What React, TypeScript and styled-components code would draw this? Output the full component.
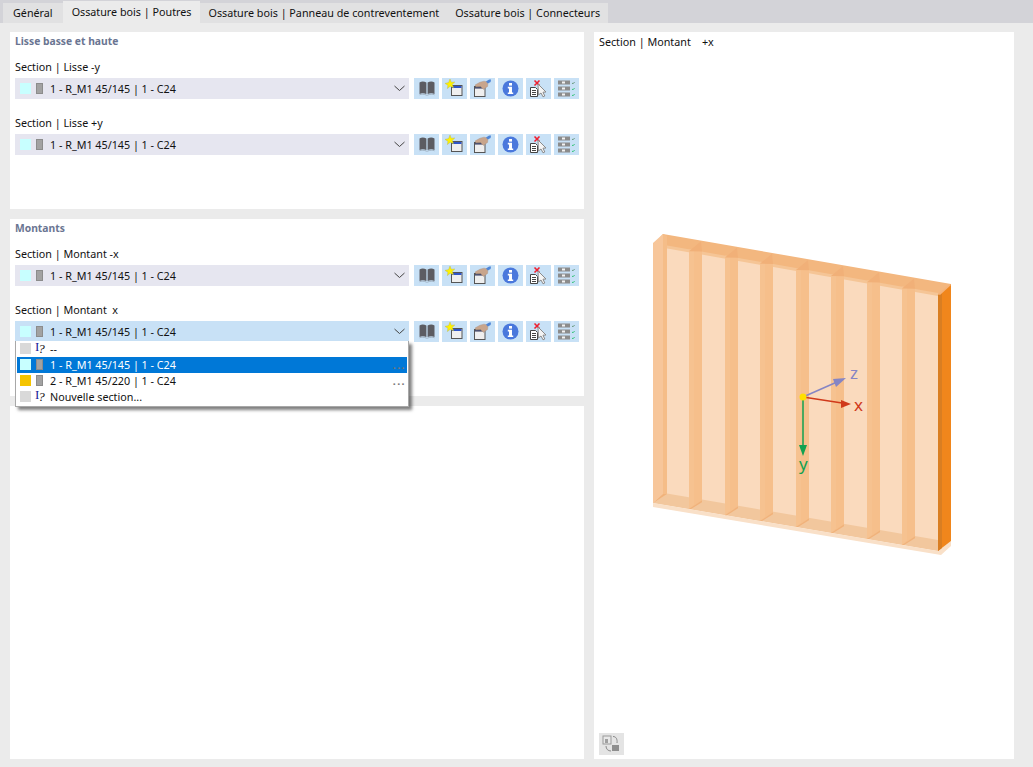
import React from "react";
import styled, { createGlobalStyle } from "styled-components";

const GlobalStyle = createGlobalStyle`
  html, body {
    margin: 0;
    padding: 0;
    background: #ebebeb;
  }
  * {
    box-sizing: border-box;
  }
`;

const tabs = [
  "Général",
  "Ossature bois | Poutres",
  "Ossature bois | Panneau de contreventement",
  "Ossature bois | Connecteurs"
];

const sectionOptions = [
  { label: "--", color: "#d9d9d9", unknown: true },
  { label: "1 - R_M1 45/145 | 1 - C24", color: "#c8ffff", selected: true, more: true },
  { label: "2 - R_M1 45/220 | 1 - C24", color: "#f5c400", more: true },
  { label: "Nouvelle section...", color: "#d9d9d9", unknown: true }
];

const BookIcon = () => (
  <svg width="16" height="15" viewBox="0 0 16 15">
    <path d="M0.5 1.5 C2.5 0.3 5 0.3 7.4 1.5 V13 C5 12 2.5 12 0.5 13 Z" fill="#5c5c62" />
    <path d="M15.5 1.5 C13.5 0.3 11 0.3 8.6 1.5 V13 C11 12 13.5 12 15.5 13 Z" fill="#5c5c62" />
    <path d="M0.5 13.8 C2.5 12.8 5 12.8 7.8 14.3 M15.5 13.8 C13.5 12.8 11 12.8 8.2 14.3" stroke="#9fb0c0" strokeWidth="1" fill="none" />
  </svg>
);

const NewIcon = () => (
  <svg width="21" height="19" viewBox="0 0 21 19">
    <rect x="7.5" y="6.5" width="10.5" height="10" fill="#efefef" stroke="#555" />
    <rect x="8" y="7" width="9.5" height="2" fill="#2f55c8" />
    <path d="M6 0 L7.2 3.2 L10.8 3 L8.2 5.4 L9.6 8.8 L6.2 7.2 L3.4 9.6 L3.9 6.2 L1 4.4 L4.6 3.6 Z" fill="#fff200" stroke="#b7b24a" strokeWidth="0.4" />
  </svg>
);

const EditIcon = () => (
  <svg width="21" height="19" viewBox="0 0 21 19">
    <rect x="2.5" y="7.5" width="10.5" height="10" fill="#efefef" stroke="#555" />
    <rect x="3" y="8" width="9.5" height="1.6" fill="#4a4f70" />
    <path d="M3 6 L8 3.2 L12 2.2 L16 3 L15.6 7.4 L11.4 10.4 L8.6 7.4 L4 7.8 Z" fill="#c8a58c" stroke="#a88f80" strokeWidth="0.4" />
    <path d="M14 2.6 C15.6 1 17.6 0.4 19 0.6 L18.6 3 L15.8 4.4 Z" fill="#4f86d8" />
  </svg>
);

const InfoIcon = () => (
  <svg width="17" height="17" viewBox="0 0 17 17">
    <circle cx="8.5" cy="8.5" r="8" fill="#4a78dc" />
    <rect x="7" y="3" width="3" height="2.6" fill="#fff" />
    <path d="M5.8 6.8 H10 V12.4 H11.2 V14 H5.8 V12.4 H7 V8.4 H5.8 Z" fill="#fff" />
  </svg>
);

const DeleteIcon = () => (
  <svg width="21" height="19" viewBox="0 0 21 19">
    <path d="M6.5 1.5 L11.5 6.5 M11.5 1.5 L6.5 6.5" stroke="#ee2030" strokeWidth="1.6" />
    <path d="M2.5 8.5 H7.5 L9.5 10.5 V17.5 H2.5 Z" fill="#fff" stroke="#444" />
    <path d="M4 11.5 H8 M4 13.5 H8 M4 15.5 H8" stroke="#444" />
    <path d="M10 5 L18 13 L15 13.2 L16.8 17 L15 17.8 L13 14 L10.4 16 Z" fill="#f4f4f4" stroke="#8a8a8a" />
  </svg>
);

const ListIcon = () => (
  <svg width="21" height="17" viewBox="0 0 21 17">
    {[0.5, 6.5, 12.5].map((y, i) => (
      <g key={y}>
        <rect x="2" y={y} width="12" height="4" fill="#8c8c8c" />
        <rect x="6" y={y + 1} width="3" height="2" fill="#f2f2f2" />
        <path d={`M16 ${y + 2.5} l1 0.8 l1.6 -1.8`} stroke={i === 0 ? "#6a9a80" : "#35c47a"} fill="none" />
      </g>
    ))}
  </svg>
);

const Chevron = () => (
  <svg width="11" height="7" viewBox="0 0 11 7">
    <path d="M0.5 1 L5.5 5.5 L10.5 1" stroke="#444" fill="none" />
  </svg>
);

const toolIcons = [BookIcon, NewIcon, EditIcon, InfoIcon, DeleteIcon, ListIcon];

const UnknownIcon = () => (
  <UnknownMark>
    <i>I</i>
    <b>?</b>
  </UnknownMark>
);

const SectionSelect = ({ open }: { open?: boolean }) => (
  <FieldRow>
    <SelectBox $open={open}>
      <Swatch $color="#c8ffff" />
      <SectionMark />
      <SelectText>1 - R_M1 45/145 | 1 - C24</SelectText>
      <Chevron />
      {open && (
        <Dropdown>
          {sectionOptions.map((option) => (
            <Option key={option.label} $selected={option.selected}>
              <Swatch $color={option.color} />
              {option.unknown ? <UnknownIcon /> : <SectionMark />}
              <SelectText>{option.label}</SelectText>
              {option.more && <MoreDots>...</MoreDots>}
            </Option>
          ))}
        </Dropdown>
      )}
    </SelectBox>
    <Tools>
      {toolIcons.map((Icon, i) => (
        <ToolButton key={i}>
          <Icon />
        </ToolButton>
      ))}
    </Tools>
  </FieldRow>
);

const Field = ({ label, open }: { label: string; open?: boolean }) => (
  <FieldBlock>
    <FieldLabel>{label}</FieldLabel>
    <SectionSelect open={open} />
  </FieldBlock>
);

const studs = [689, 725, 760, 796, 831, 867, 902];
const topY = (x: number) => 243 + (x - 653) * 0.1745;
const botY = (x: number) => 503 + (x - 653) * 0.1685;

const WallDrawing = () => (
  <Drawing viewBox="594 50 420 709">
    {/* front face */}
    <polygon points={`653,${topY(653)} 938,${topY(938)} 938,${botY(938)} 653,${botY(653)}`} fill="#fadabd" />
    {/* top plate */}
    <polygon points="663,234 951,284 938,295 653,245" fill="#f3b77f" />
    <polygon points="653,243 938,293 938,296 653,246" fill="#f5c596" />
    {/* bottom plate */}
    <polygon points={`664,${botY(653) - 10} 938,${botY(938) - 11} 938,${botY(938)} 653,${botY(653)}`} fill="#f2c79d" />
    <polygon points="653,503 938,551 951,541 951,546 941,555 653,507" fill="#f9e0c8" />
    {/* first stud */}
    <polygon points={`653,${topY(653)} 663,234 663,494 653,${botY(653)}`} fill="#f7c69a" />
    <polygon points={`663,234 667,236 667,494 663,494`} fill="#f5bd88" />
    <polygon points={`653,${botY(653)} 667,494 663,494`} fill="#f1b27a" />
    {/* studs */}
    {studs.map((x) => (
      <g key={x}>
        <polygon
          points={`${x},${topY(x)} ${x + 13},${topY(x + 13)} ${x + 13},${botY(x + 13) - 11} ${x},${botY(x)}`}
          fill="#f6bf8b"
        />
        <polygon
          points={`${x},${topY(x)} ${x + 5},${topY(x + 5)} ${x + 5},${botY(x + 5) - 5} ${x},${botY(x)}`}
          fill="#f6c290"
        />
        <polygon
          points={`${x},${topY(x) + 2} ${x + 12},${topY(x) - 8} ${x + 13},${topY(x + 13)}`}
          fill="#f1b078"
        />
        <polygon
          points={`${x},${botY(x)} ${x + 13},${botY(x + 13) - 11} ${x + 13},${botY(x + 13) - 9} ${x + 2},${botY(x)}`}
          fill="#f1b27a"
        />
      </g>
    ))}
    {/* right end stud */}
    <polygon points="938,295 951,284 951,541 938,551" fill="#f0861c" />
    <polygon points="938,295 942,292 942,548 938,551" fill="#d97e22" />
    <polygon points="938,294 949,285 951,285 940,295" fill="#f5b278" />
    {/* axes */}
    <path d="M803 397 L837 382" stroke="#8585c4" strokeWidth="1.5" />
    <polygon points="846,378 836,387 833,379" fill="#8585c4" />
    <path d="M803 397 L842 403" stroke="#d0391a" strokeWidth="1.5" />
    <polygon points="851,404 841,408 841,400" fill="#d0391a" />
    <path d="M803 397 L803 447" stroke="#12a150" strokeWidth="1.5" />
    <polygon points="803,456 799,445 807,445" fill="#12a150" />
    <circle cx="803" cy="397" r="3.5" fill="#ffe000" />
    <AxisLabel x="850" y="379" fill="#8585c4">z</AxisLabel>
    <AxisLabel x="854" y="411" fill="#d0391a">x</AxisLabel>
    <AxisLabel x="799" y="470" fill="#12a150">y</AxisLabel>
  </Drawing>
);

const RotateIcon = () => (
  <svg width="19" height="18" viewBox="0 0 19 18">
    <rect x="1" y="1" width="8" height="8" fill="#e8e8e8" stroke="#9a9a9a" />
    <rect x="3" y="4" width="3" height="4" fill="#a0a0a0" />
    <rect x="10" y="10" width="7" height="6" fill="#8e8e8e" />
    <path d="M11 1.5 C14 1.5 15.5 4 15 8 M4 11 C4 14 6 16 9 16" stroke="#8a8a8a" fill="none" />
  </svg>
);

export default function App() {
  return (
    <Page>
      <GlobalStyle />
      <TabBar>
        {tabs.map((tab, i) => (
          <Tab key={tab} $active={i === 1}>
            {tab}
          </Tab>
        ))}
      </TabBar>
      <Content>
        <LeftColumn>
          <Panel>
            <PanelTitle>Lisse basse et haute</PanelTitle>
            <Field label="Section | Lisse -y" />
            <Field label="Section | Lisse +y" />
          </Panel>
          <Panel>
            <PanelTitle>Montants</PanelTitle>
            <Field label="Section | Montant -x" />
            <Field label="Section | Montant  x" open />
          </Panel>
          <EmptyPanel />
        </LeftColumn>
        <Preview>
          <PreviewTitle>{"Section | Montant    +x"}</PreviewTitle>
          <WallDrawing />
          <RotateButton>
            <RotateIcon />
          </RotateButton>
        </Preview>
      </Content>
    </Page>
  );
}

const Page = styled.div`
  width: 1033px;
  height: 767px;
  overflow: hidden;
  display: flex;
  flex-direction: column;
  background: #ebebeb;
  color: #111;
  font-family: "Noto Sans", "Open Sans", sans-serif;
  font-size: 10.75px;
`;

const TabBar = styled.div`
  height: 23px;
  flex: none;
  display: flex;
  align-items: flex-end;
  padding-left: 3px;
  background: #d3d3d8;
`;

const Tab = styled.div<{ $active?: boolean }>`
  height: ${({ $active }) => ($active ? "22px" : "20px")};
  padding: 0 ${({ $active }) => ($active ? "9px" : "8px")};
  display: flex;
  align-items: center;
  white-space: nowrap;
  background: ${({ $active }) => ($active ? "#ebebeb" : "#e1e1e2")};

  &:first-child {
    padding: 0 10px;
  }
`;

const Content = styled.div`
  flex: 1;
  display: flex;
  gap: 10px;
  padding: 9px 19px 8px 10px;
  min-height: 0;
`;

const LeftColumn = styled.div`
  width: 574px;
  display: flex;
  flex-direction: column;
  gap: 10px;
`;

const Panel = styled.section`
  height: 177px;
  padding: 1px 5px 0;
  background: #fff;
`;

const EmptyPanel = styled.section`
  flex: 1;
  background: #fff;
`;

const PanelTitle = styled.div`
  height: 16px;
  line-height: 16px;
  font-size: 10.3px;
  font-weight: 700;
  color: #6a7592;
`;

const FieldBlock = styled.div`
  margin-top: 10px;
  & + & {
    margin-top: 16px;
  }
`;

const FieldLabel = styled.div`
  height: 16px;
  margin-bottom: 3px;
  line-height: 16px;
  white-space: pre;
`;

const FieldRow = styled.div`
  display: flex;
  gap: 5px;
`;

const SelectBox = styled.div<{ $open?: boolean }>`
  position: relative;
  width: 394px;
  height: 21px;
  padding: 0 4px 0 5px;
  display: flex;
  align-items: center;
  background: ${({ $open }) => ($open ? "#c8e1f6" : "#e6e6f0")};
`;

const Swatch = styled.span<{ $color: string }>`
  width: 11px;
  height: 11px;
  flex: none;
  background: ${({ $color }) => $color};
`;

const SectionMark = styled.span`
  width: 7px;
  height: 11px;
  flex: none;
  margin: 0 7px 0 5px;
  background: #a2a2a2;
  border: 1px solid #8c8c8c;
`;

const UnknownMark = styled.span`
  width: 10px;
  flex: none;
  margin: 0 5px 0 4px;
  display: flex;
  font-size: 11px;
  line-height: 12px;
  white-space: nowrap;
  color: #111;

  i {
    margin-top: -2px;
    font-family: "Liberation Serif", serif;
    font-style: normal;
    font-size: 13px;
    color: #20209a;
  }

  b {
    margin-left: -1px;
    font-family: "Liberation Serif", serif;
    font-weight: 400;
    font-style: italic;
    font-size: 13px;
  }
`;

const SelectText = styled.span`
  flex: 1;
  white-space: nowrap;
`;

const Dropdown = styled.div`
  position: absolute;
  top: 20px;
  left: 0;
  z-index: 5;
  width: 394px;
  padding: 0 1px 1px;
  background: #fff;
  border: 1px solid #a8a8a8;
  border-top: none;
  color: #111;
  box-shadow: 3px 3px 3px rgba(0, 0, 0, 0.5);
`;

const Option = styled.div<{ $selected?: boolean }>`
  height: 16px;
  padding: 0 0 1px 3px;
  display: flex;
  align-items: center;
  background: ${({ $selected }) => ($selected ? "#0078d7" : "transparent")};
  color: ${({ $selected }) => ($selected ? "#fff" : "#111")};
`;

const MoreDots = styled.span`
  padding-right: 1px;
  color: #777;
  font-weight: 700;
  letter-spacing: 1.4px;
`;

const Tools = styled.div`
  display: flex;
  gap: 3px;
`;

const ToolButton = styled.div`
  width: 25px;
  height: 21px;
  display: flex;
  align-items: center;
  justify-content: center;
  background: #c8e1f6;
`;

const Preview = styled.section`
  position: relative;
  flex: 1;
  display: flex;
  flex-direction: column;
  background: #fff;
`;

const PreviewTitle = styled.div`
  height: 18px;
  padding: 2px 0 0 5px;
  line-height: 16px;
  white-space: pre;
`;

const Drawing = styled.svg`
  display: block;
  width: 420px;
  height: 709px;
`;

const AxisLabel = styled.text`
  font-family: "Noto Sans", sans-serif;
  font-size: 17px;
`;

const RotateButton = styled.div`
  position: absolute;
  left: 5px;
  bottom: 4px;
  width: 25px;
  height: 22px;
  display: flex;
  align-items: center;
  justify-content: center;
  background: #e4e4e4;
`;
